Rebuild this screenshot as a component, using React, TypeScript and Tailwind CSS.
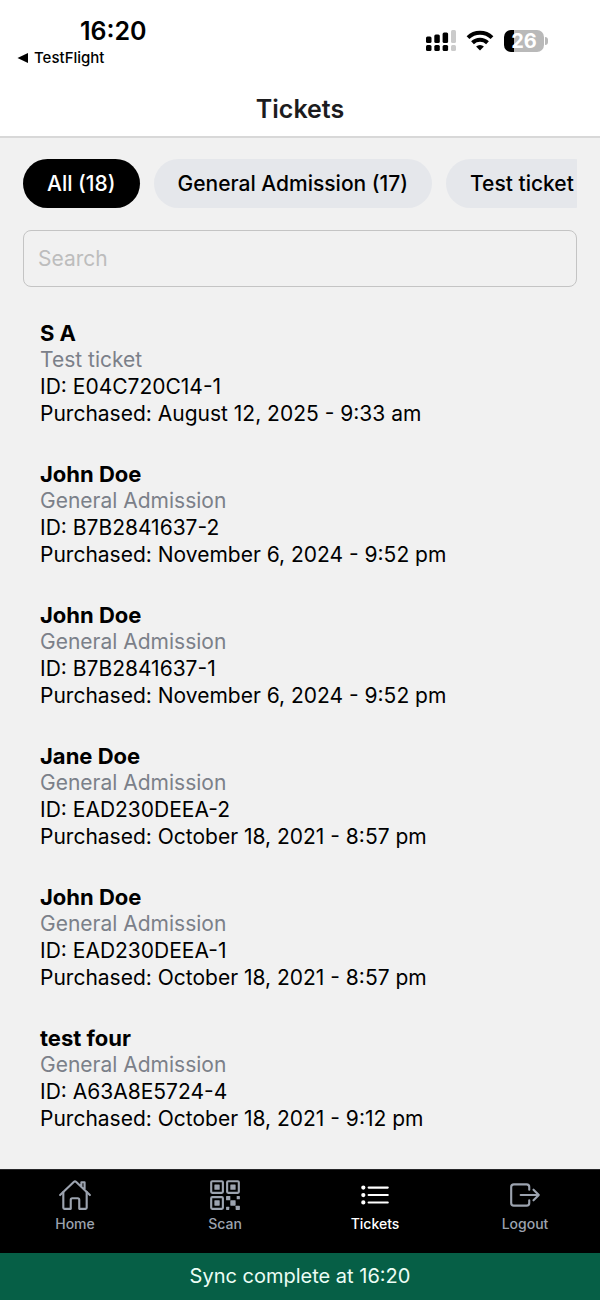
import clsx from 'clsx'
import { useState } from 'react'
import type { IconType } from 'react-icons'
import { IoExitOutline, IoHomeOutline, IoListOutline, IoQrCodeOutline } from 'react-icons/io5'

type Ticket = {
  id: string
  name: string
  type: string
  purchased: string
}

const tickets: Ticket[] = [
  { id: 'E04C720C14-1', name: 'S A', type: 'Test ticket', purchased: 'August 12, 2025 - 9:33 am' },
  { id: 'B7B2841637-2', name: 'John Doe', type: 'General Admission', purchased: 'November 6, 2024 - 9:52 pm' },
  { id: 'B7B2841637-1', name: 'John Doe', type: 'General Admission', purchased: 'November 6, 2024 - 9:52 pm' },
  { id: 'EAD230DEEA-2', name: 'Jane Doe', type: 'General Admission', purchased: 'October 18, 2021 - 8:57 pm' },
  { id: 'EAD230DEEA-1', name: 'John Doe', type: 'General Admission', purchased: 'October 18, 2021 - 8:57 pm' },
  { id: 'A63A8E5724-4', name: 'test four', type: 'General Admission', purchased: 'October 18, 2021 - 9:12 pm' },
]

const filters = ['All (18)', 'General Admission (17)', 'Test ticket']

const tabs: { label: string; icon: IconType }[] = [
  { label: 'Home', icon: IoHomeOutline },
  { label: 'Scan', icon: IoQrCodeOutline },
  { label: 'Tickets', icon: IoListOutline },
  { label: 'Logout', icon: IoExitOutline },
]

function SignalIcon() {
  return (
    <svg width="30" height="22" viewBox="0 0 30 22" aria-hidden="true">
      <rect x="0" y="6.5" width="5.5" height="6.5" rx="1.5" />
      <rect x="8.3" y="4.5" width="5.5" height="8.5" rx="1.5" />
      <rect x="16.6" y="2.5" width="5.5" height="10.5" rx="1.5" />
      <rect x="25" y="0" width="5" height="13" rx="1.5" fill="#cbcbcb" />
      <rect x="0" y="15" width="5.5" height="6" rx="1.5" />
      <rect x="8.3" y="15" width="5.5" height="6" rx="1.5" />
      <rect x="16.6" y="15" width="5.5" height="6" rx="1.5" />
      <rect x="25" y="15" width="5" height="6" rx="1.5" fill="#cbcbcb" />
    </svg>
  )
}

function WifiIcon() {
  return (
    <svg width="28" height="22" viewBox="0 0 28 22" fill="none" stroke="#000" strokeWidth="4" aria-hidden="true">
      <path d="M2 7.6a17.3 17.3 0 0 1 24 0" />
      <path d="M6.5 12.7a10.9 10.9 0 0 1 15 0" />
      <path d="M14 20.5l-3.9-4a5.6 5.6 0 0 1 7.8 0z" fill="#000" stroke="none" />
    </svg>
  )
}

function Battery() {
  return (
    <div className="flex items-center gap-px">
      <div className="flex h-[22px] w-10 items-center justify-center rounded-[7px] bg-linear-to-r from-black from-26% to-[#b9b9b9] to-26% text-[20px] font-bold leading-none text-white">
        26
      </div>
      <div className="h-2 w-[3px] rounded-r-full bg-[#b9b9b9]" />
    </div>
  )
}

function TicketItem({ ticket }: { ticket: Ticket }) {
  return (
    <li className="text-[21px] leading-[27px] text-black">
      <h2 className="text-[22px] font-bold leading-[26px]">{ticket.name}</h2>
      <p className="text-[#7b8089]">{ticket.type}</p>
      <p>ID: {ticket.id}</p>
      <p>Purchased: {ticket.purchased}</p>
    </li>
  )
}

export default function App() {
  const [filter, setFilter] = useState(filters[0])
  const [tab, setTab] = useState('Tickets')

  return (
    <div className="flex min-h-screen flex-col bg-[#f1f1f1] font-[Inter,sans-serif]">
      <header className="border-b-2 border-[#d8d8d8] bg-white">
        <div className="flex items-start justify-between pl-4 pr-[52px] pt-4">
          <div>
            <div className="pl-16 text-[25px] font-semibold leading-[30px] text-black">16:20</div>
            <button type="button" className="flex items-center gap-[6px] text-[15px] font-medium leading-6 text-black">
              <svg width="12" height="10" viewBox="0 0 12 10" aria-hidden="true">
                <path d="M1.5 5L12 0v10z" />
              </svg>
              TestFlight
            </button>
          </div>
          <div className="flex items-center gap-[10px] pt-[14px]">
            <SignalIcon />
            <WifiIcon />
            <Battery />
          </div>
        </div>
        <h1 className="pb-3 pt-6 text-center text-[25px] font-semibold leading-[30px] text-[#1c1c1e]">Tickets</h1>
      </header>

      <main className="flex-1 px-[23px] pt-[21px]">
        <div className="flex gap-[14px] overflow-hidden">
          {filters.map((label) => (
            <button
              key={label}
              type="button"
              onClick={() => setFilter(label)}
              className={clsx(
                'h-[49px] shrink-0 whitespace-nowrap rounded-full px-6 text-[21px] font-medium',
                filter === label ? 'bg-black text-white' : 'bg-[#e5e7eb] text-black',
              )}
            >
              {label}
            </button>
          ))}
        </div>
        <input
          type="search"
          aria-label="Search"
          placeholder="Search"
          className="mt-[22px] block h-[57px] w-full rounded-lg border border-[#c4c4c4] bg-transparent px-[14px] text-[21px] text-black placeholder:text-[#bdbdbd]"
        />
        <ul className="flex flex-col gap-[34px] px-[17px] py-[33px]">
          {tickets.map((ticket) => (
            <TicketItem key={ticket.id} ticket={ticket} />
          ))}
        </ul>
      </main>

      <footer className="sticky bottom-0">
        <nav className="grid h-[84px] grid-cols-4 items-start border-t border-[#272729] bg-black pt-2">
          {tabs.map(({ label, icon: Icon }) => (
            <button
              key={label}
              type="button"
              onClick={() => setTab(label)}
              className={clsx(
                'flex flex-col items-center gap-0.5 text-[14px] font-medium leading-5',
                tab === label ? 'text-white' : 'text-[#9ca3af]',
              )}
            >
              <Icon className="size-[34px]" />
              {label}
            </button>
          ))}
        </nav>
        <p className="bg-[#065f46] py-[9px] text-center text-[20px] leading-[29px] text-[#ecfdf5]">
          Sync complete at 16:20
        </p>
      </footer>
    </div>
  )
}
